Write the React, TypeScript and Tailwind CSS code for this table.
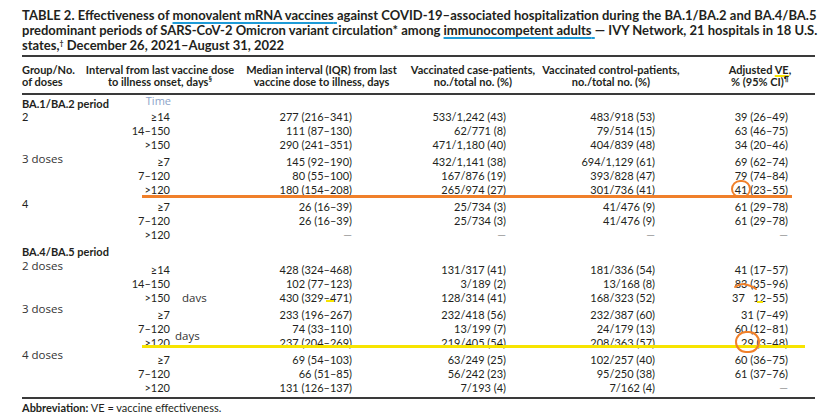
import React from "react";

type Row = {
  iv: React.ReactNode;
  med: React.ReactNode;
  cas: React.ReactNode;
  ctl: React.ReactNode;
  ve: React.ReactNode;
};

type Group = { label: React.ReactNode; labelShift: string; rows: Row[]; gap: string };

const Dash = () => <span className="text-[#9a9a9a]">—</span>;

const Hand = ({ children }: { children: React.ReactNode }) => (
  <span className="font-['Open_Sans',sans-serif] text-[11.5px] text-[#333]">{children}</span>
);

function DataRow({ r }: { r: Row }) {
  return (
    <div className="flex h-[14px] leading-[14px] whitespace-nowrap">
      <div className="w-[154px] pr-[67px] text-right">{r.iv}</div>
      <div className="w-[169px] pr-[54px] text-right">{r.med}</div>
      <div className="w-[134px] pr-[34px] text-right">{r.cas}</div>
      <div className="w-[142px] pr-[27px] text-right">{r.ctl}</div>
      <div className="w-[133px] pr-[27px] text-right">{r.ve}</div>
    </div>
  );
}

function GroupBlock({ g }: { g: Group }) {
  return (
    <div className={`flex ${g.gap}`}>
      <div className={`w-[61px] h-[14px] leading-[14px] whitespace-nowrap ${g.labelShift}`}>{g.label}</div>
      <div className="flex flex-col">
        {g.rows.map((r, i) => (
          <DataRow key={i} r={r} />
        ))}
      </div>
    </div>
  );
}

const noted = (v: string, note: string, cls: string) => (
  <span className="relative">
    {v}
    <span className={`absolute left-full ${cls}`}>
      <Hand>{note}</Hand>
    </span>
  </span>
);

const sec1: Group[] = [
  {
    label: "2",
    labelShift: "",
    gap: "mt-0",
    rows: [
      { iv: "≥14", med: "277 (216–341)", cas: "533/1,242 (43)", ctl: "483/918 (53)", ve: "39 (26–49)" },
      { iv: "14–150", med: "111 (87–130)", cas: "62/771 (8)", ctl: "79/514 (15)", ve: "63 (46–75)" },
      { iv: ">150", med: "290 (241–351)", cas: "471/1,180 (40)", ctl: "404/839 (48)", ve: "34 (20–46)" },
    ],
  },
  {
    label: <Hand>3 doses</Hand>,
    labelShift: "-mt-[3px]",
    gap: "mt-[3px]",
    rows: [
      { iv: "≥7", med: "145 (92–190)", cas: "432/1,141 (38)", ctl: "694/1,129 (61)", ve: "69 (62–74)" },
      { iv: "7–120", med: "80 (55–100)", cas: "167/876 (19)", ctl: "393/828 (47)", ve: "79 (74–84)" },
      { iv: ">120", med: "180 (154–208)", cas: "265/974 (27)", ctl: "301/736 (41)", ve: "41 (23–55)" },
    ],
  },
  {
    label: "4",
    labelShift: "-mt-[3px]",
    gap: "mt-[3px]",
    rows: [
      { iv: "≥7", med: "26 (16–39)", cas: "25/734 (3)", ctl: "41/476 (9)", ve: "61 (29–78)" },
      { iv: "7–120", med: "26 (16–39)", cas: "25/734 (3)", ctl: "41/476 (9)", ve: "61 (29–78)" },
      { iv: ">120", med: <Dash />, cas: <Dash />, ctl: <Dash />, ve: <Dash /> },
    ],
  },
];

const sec2: Group[] = [
  {
    label: <Hand>2 doses</Hand>,
    labelShift: "-mt-[4px]",
    gap: "mt-[4px]",
    rows: [
      { iv: "≥14", med: "428 (324–468)", cas: "131/317 (41)", ctl: "181/336 (54)", ve: "41 (17–57)" },
      { iv: "14–150", med: "102 (77–123)", cas: "3/189 (2)", ctl: "13/168 (8)", ve: "83 (35–96)" },
      {
        iv: noted(">150", "davs", "ml-[12px] top-0"),
        med: "430 (329–471)",
        cas: "128/314 (41)",
        ctl: "168/323 (52)",
        ve: "37\u2002 12–55)",
      },
    ],
  },
  {
    label: <Hand>3 doses</Hand>,
    labelShift: "-mt-[6px]",
    gap: "mt-[3px]",
    rows: [
      { iv: "≥7", med: "233 (196–267)", cas: "232/418 (56)", ctl: "232/387 (60)", ve: "31 (7–49)" },
      { iv: "7–120", med: "74 (33–110)", cas: "13/199 (7)", ctl: "24/179 (13)", ve: "60 (12–81)" },
      {
        iv: noted(">120", "days", "ml-[5px] -top-[7px]"),
        med: "237 (204–269)",
        cas: "219/405 (54)",
        ctl: "208/363 (57)",
        ve: "29 (3–48)",
      },
    ],
  },
  {
    label: <Hand>4 doses</Hand>,
    labelShift: "-mt-[5px]",
    gap: "mt-[3px]",
    rows: [
      { iv: "≥7", med: "69 (54–103)", cas: "63/249 (25)", ctl: "102/257 (40)", ve: "60 (36–75)" },
      { iv: "7–120", med: "66 (51–85)", cas: "56/242 (23)", ctl: "95/250 (38)", ve: "61 (37–76)" },
      { iv: ">120", med: "131 (126–137)", cas: "7/193 (4)", ctl: "7/162 (4)", ve: <Dash /> },
    ],
  },
];

const Sup = ({ children }: { children: React.ReactNode }) => (
  <span className="relative -top-[4px] text-[7px]">{children}</span>
);

export default function App() {
  return (
    <div className="relative w-[831px] h-[414px] overflow-hidden bg-white text-[#231f20] font-['Lato',sans-serif]">
      <div className="pl-[22px] w-[815px]">
        {/* Title */}
        <div className="pt-[8px] text-[13px] font-bold leading-[15px]">
          <div className="whitespace-nowrap [text-align-last:justify]">
            TABLE 2. Effectiveness of{" "}
            <span className="underline decoration-[#1e9bd7] decoration-2 underline-offset-[2px]">
              monovalent mRNA vaccines{" "}
            </span>
            against COVID-19–associated hospitalization during the BA.1/BA.2 and BA.4/BA.5
          </div>
          <div className="whitespace-nowrap [text-align-last:justify]">
            predominant periods of SARS-CoV-2 Omicron variant circulation* among{" "}
            <span className="underline decoration-[#1e9bd7] decoration-2 underline-offset-[2px]">
              immunocompetent adults{" "}
            </span>
            — IVY Network, 21 hospitals in 18 U.S.
          </div>
          <div className="whitespace-nowrap">
            states,<Sup>†</Sup> December 26, 2021–August 31, 2022
          </div>
        </div>
        <div className="h-[2px] bg-[#3a3a3a]" />

        {/* Header */}
        <div className="flex pt-[7px] pb-[4px] text-[11px] font-bold leading-[12px] whitespace-nowrap">
          <div className="w-[61px]">
            Group/No.
            <br />
            of doses
          </div>
          <div className="w-[154px] text-center">
            Interval from last vaccine dose
            <br />
            to illness onset, days<Sup>§</Sup>
          </div>
          <div className="w-[169px] text-center">
            Median interval (IQR) from last
            <br />
            vaccine dose to illness, days
          </div>
          <div className="w-[134px] text-center">
            Vaccinated case-patients,
            <br />
            no./total no. (%)
          </div>
          <div className="w-[142px] text-center">
            Vaccinated control-patients,
            <br />
            no./total no. (%)
          </div>
          <div className="w-[133px] pl-[23px] text-center">
            Adjusted{" "}
            <span className="underline decoration-[#f7e400] decoration-2 underline-offset-[1px]">VE</span>,
            <br />
            % (95% CI)<Sup>¶</Sup>
          </div>
        </div>
        <div className="h-[2px] bg-[#3a3a3a]" />

        {/* Body */}
        <div className="text-[11px]">
          <div className="flex h-[13px] leading-[14px] mt-[2px] whitespace-nowrap">
            <div className="w-[61px] font-bold">BA.1/BA.2 period</div>
            <div className="w-[154px] pr-[66px] text-right -mt-[3px]">
              <span className="font-['Open_Sans',sans-serif] text-[11px] text-[#8ba3c8]">Time</span>
            </div>
          </div>
          {sec1.map((g, i) => (
            <GroupBlock key={i} g={g} />
          ))}
          <div className="flex h-[14px] leading-[14px] mt-[3px] whitespace-nowrap">
            <div className="w-[61px] font-bold">BA.4/BA.5 period</div>
          </div>
          {sec2.map((g, i) => (
            <GroupBlock key={i} g={g} />
          ))}
        </div>
        <div className="mt-[2px] h-[2px] bg-[#3a3a3a]" />
        <div className="mt-[2px] text-[11px] leading-[13px]">
          <span className="font-bold">Abbreviation:</span> VE = vaccine effectiveness.
        </div>
      </div>

      {/* Annotations */}
      <div className="absolute left-[142px] top-[195px] w-[650px] h-[3px] bg-[#f0802a]" />
      <div className="absolute left-[142px] top-[345px] w-[663px] h-[3px] bg-[#f7e400]" />
      <div className="absolute left-[731px] top-[180px] w-[20px] h-[18px] rounded-full border-[2.5px] border-[#f0802a]" />
      <div className="absolute left-[735px] top-[331px] w-[25px] h-[22px] rounded-full border-[2.5px] border-[#f0802a]" />
      <svg className="absolute left-[733px] top-[281px]" width="26" height="10" viewBox="0 0 26 10">
        <path d="M2 6 C6 3 9 2.5 13 3.5 C17 4.5 20 5.5 23 8" fill="none" stroke="#f0802a" strokeWidth="2" strokeLinecap="round" />
      </svg>
      <div className="absolute left-[326px] top-[300px] w-[8px] h-[2px] bg-[#f7e400]" />
      <div className="absolute left-[757px] top-[301px] w-[6px] h-[2px] bg-[#f7e400]" />
    </div>
  );
}
